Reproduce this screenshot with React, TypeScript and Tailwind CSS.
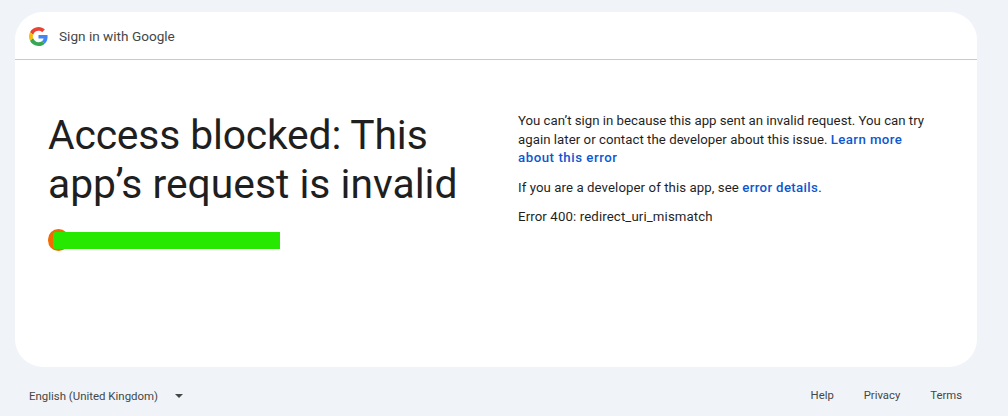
import React from 'react';

const GoogleLogo = () => (
  <svg viewBox="0 0 48 48" className="w-[19px] h-[19px] shrink-0">
    <path fill="#EA4335" d="M24 9.5c3.54 0 6.71 1.22 9.21 3.6l6.85-6.85C35.9 2.38 30.47 0 24 0 14.62 0 6.51 5.38 2.56 13.22l7.98 6.19C12.43 13.72 17.74 9.5 24 9.5z" />
    <path fill="#4285F4" d="M46.98 24.55c0-1.57-.15-3.09-.38-4.55H24v9.02h12.94c-.58 2.96-2.26 5.48-4.78 7.18l7.73 6c4.51-4.18 7.09-10.36 7.09-17.65z" />
    <path fill="#FBBC05" d="M10.53 28.59c-.48-1.45-.76-2.99-.76-4.59s.27-3.14.76-4.59l-7.98-6.19C.92 16.46 0 20.12 0 24c0 3.88.92 7.54 2.56 10.78l7.97-6.19z" />
    <path fill="#34A853" d="M24 48c6.48 0 11.93-2.13 15.89-5.81l-7.73-6c-2.15 1.45-4.92 2.3-8.16 2.3-6.26 0-11.57-4.22-13.47-9.91l-7.98 6.19C6.51 42.62 14.62 48 24 48z" />
  </svg>
);

export default function App() {
  return (
    <div className="w-[1008px] h-[416px] overflow-hidden bg-[#f0f4f9] flex flex-col font-['Roboto',sans-serif]">
      <div className="mt-3 ml-[15px] w-[962px] h-[355px] bg-white rounded-[28px] flex flex-col shrink-0">
        <div className="h-[48px] shrink-0 border-b border-[#c9c9c9] flex items-center pl-[14px] gap-[11px] pt-[2px]">
          <GoogleLogo />
          <span className="text-[13.6px] font-normal text-[#444746]">Sign in with Google</span>
        </div>
        <div className="flex flex-1">
          <div className="w-[503px] pl-[33px] pt-[51px] shrink-0">
            <h1 className="text-[40.8px] leading-[49px] font-normal text-[#1f1f1f]">
              <span className="block tracking-[-0.15px]">Access blocked: This</span>
              <span className="block">app’s request is invalid</span>
            </h1>
            <div className="flex items-center mt-[20px]">
              <div className="w-[21px] h-[22px] rounded-full bg-[#f26b00] shrink-0" />
              <div className="w-[227px] h-[17px] -ml-[16px] bg-[#27e800] rounded-l-[3px]" />
            </div>
          </div>
          <div className="w-[420px] pt-[52px] text-[13.23px] leading-[18.5px] text-[#1f1f1f]">
            <p>
              <span className="block">You can’t sign in because this app sent an invalid request. You can try</span>
              <span className="block">
                <span className="tracking-[0.04px]">again later or contact the developer about this issue. </span>
                <span className="font-medium tracking-[0.4px] text-[#0b57d0]">Learn more</span>
              </span>
              <span className="block font-medium tracking-[0.55px] text-[#0b57d0]">about this error</span>
            </p>
            <p className="mt-[11px]">
              <span className="tracking-[0.08px]">If you are a developer of this app, see </span>
              <span className="font-medium tracking-[0.35px] text-[#0b57d0]">error details</span>
              <span>.</span>
            </p>
            <p className="mt-[11px] tracking-[0.12px]">Error 400: redirect_uri_mismatch</p>
          </div>
        </div>
      </div>
      <div className="flex items-center justify-between pl-[29px] pr-[46px] mt-[19px] leading-[20px] text-[#444746]">
        <div className="flex items-center text-[11.45px]">
          <span>English (United Kingdom)</span>
          <div className="ml-[17px] w-0 h-0 border-x-[4px] border-x-transparent border-t-[4px] border-t-[#444746]" />
        </div>
        <div className="flex gap-[30px] text-[11.3px]">
          <span>Help</span>
          <span>Privacy</span>
          <span>Terms</span>
        </div>
      </div>
    </div>
  );
}
